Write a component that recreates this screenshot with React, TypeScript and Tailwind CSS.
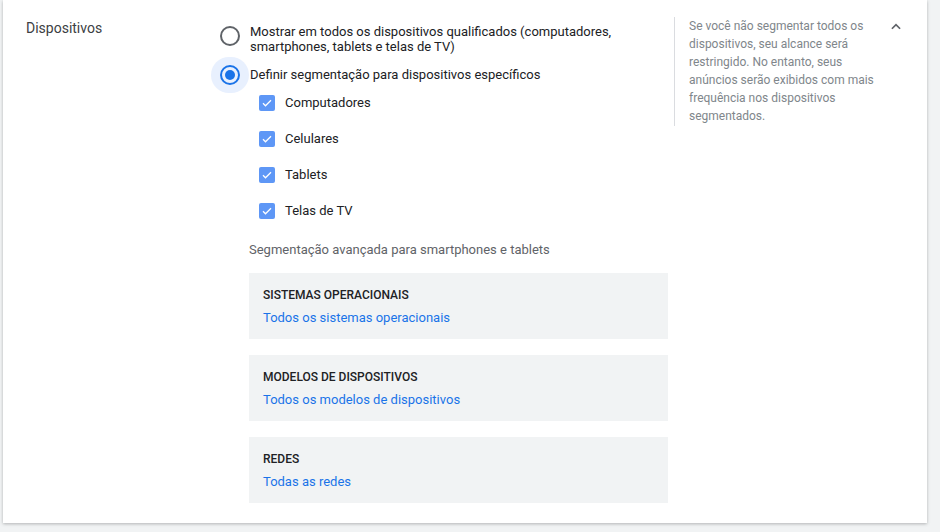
import React from "react";

const Check = ({ label }: { label: string }) => (
  <div className="flex items-center h-[36px]">
    <div className="w-[16px] h-[16px] rounded-[2px] bg-[#5e97f6] flex items-center justify-center">
      <svg width="12" height="12" viewBox="0 0 24 24"><path d="M4 12.5l5 5L20 6.5" stroke="white" strokeWidth="2.6" fill="none" /></svg>
    </div>
    <span className="ml-[10px] text-[13px] text-[#202124]">{label}</span>
  </div>
);

const Box = ({ title, link }: { title: string; link: string }) => (
  <div className="bg-[#f1f3f4] h-[66px] px-[14px] pt-[14px]">
    <div className="text-[12px] font-medium text-[#202124] leading-[16px]">{title}</div>
    <div className="text-[13px] text-[#1a73e8] mt-[7px] leading-[16px]">{link}</div>
  </div>
);

export default function App() {
  return (
    <div className="w-[940px] h-[532px] bg-[#f1f3f4]" style={{ fontFamily: "Roboto, 'Liberation Sans', sans-serif" }}>
      <div className="ml-[3px] w-[924px] h-[523px] bg-white shadow-[0_1px_3px_rgba(60,64,67,0.35)] flex">
        <div className="w-[208px] pl-[23px] pt-[18px] text-[14px] text-[#3c4043]">Dispositivos</div>
        <div className="w-[455px] pt-[24px]">
          <div className="flex">
            <div className="w-[38px] flex justify-start pl-[9px] pt-[2px]">
              <div className="w-[20px] h-[20px] rounded-full border-2 border-[#5f6368]" />
            </div>
            <div className="text-[13px] leading-[15px] text-[#202124] pl-[1px]">Mostrar em todos os dispositivos qualificados (computadores,<br />smartphones, tablets e telas de TV)</div>
          </div>
          <div className="flex items-center mt-[3px]">
            <div className="w-[38px] h-[36px] flex items-center justify-center rounded-full bg-[#e8f0fe]">
              <div className="w-[20px] h-[20px] rounded-full border-2 border-[#1a73e8] flex items-center justify-center">
                <div className="w-[10px] h-[10px] rounded-full bg-[#1a73e8]" />
              </div>
            </div>
            <div className="text-[13px] text-[#202124] pl-[1px]">Definir segmentação para dispositivos específicos</div>
          </div>
          <div className="pl-[48px] mt-[-8px]">
            <Check label="Computadores" />
            <Check label="Celulares" />
            <Check label="Tablets" />
            <Check label="Telas de TV" />
          </div>
          <div className="pl-[38px]">
            <div className="text-[13px] text-[#5f6368] mt-[13px] leading-[16px]">Segmentação avançada para smartphones e tablets</div>
            <div className="flex flex-col gap-[16px] mt-[15px] w-[419px]">
              <Box title="SISTEMAS OPERACIONAIS" link="Todos os sistemas operacionais" />
              <Box title="MODELOS DE DISPOSITIVOS" link="Todos os modelos de dispositivos" />
              <Box title="REDES" link="Todas as redes" />
            </div>
          </div>
        </div>
        <div className="mt-[17px] ml-[8px] h-[109px] border-l border-[#dadce0] pl-[14px] w-[200px] text-[12px] leading-[18px] text-[#80868b]">
          Se você não segmentar todos os dispositivos, seu alcance será restringido. No entanto, seus anúncios serão exibidos com mais frequência nos dispositivos segmentados.
        </div>
        <div className="ml-[15px] pt-[20px]">
          <svg width="14" height="14" viewBox="0 0 24 24"><path d="M5 15l7-7 7 7" stroke="#5f6368" strokeWidth="3" fill="none" /></svg>
        </div>
      </div>
    </div>
  );
}
